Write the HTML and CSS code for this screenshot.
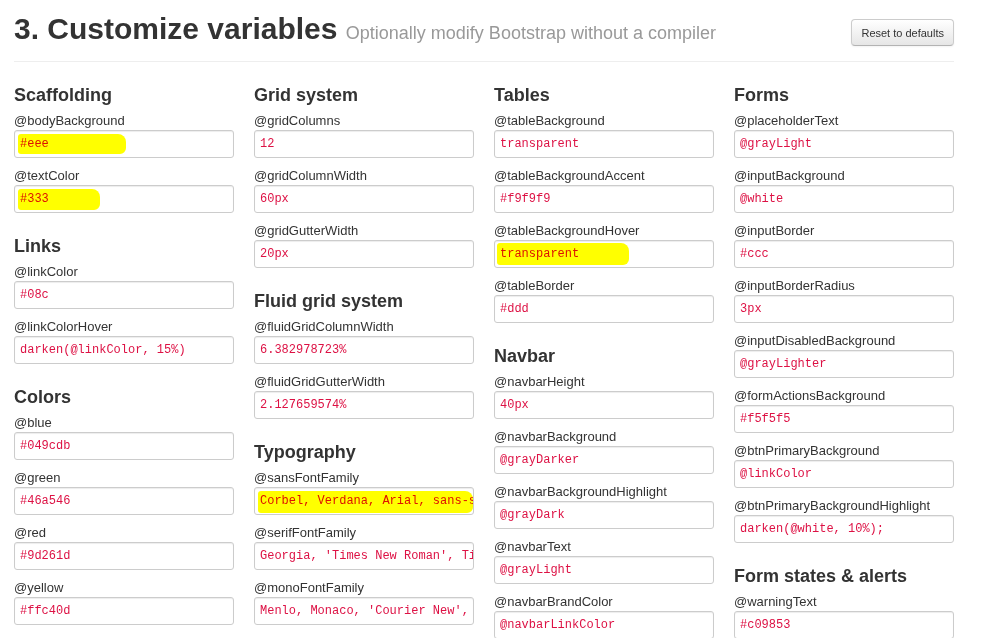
FILE: index.html
```html
<!DOCTYPE html>
<html>
<head>
<meta charset="utf-8">
<title>Customize variables</title>
<link rel="stylesheet" href="styles.css">
</head>
<body>
<div class="container">
  <div class="page-header">
    <h1>3. Customize variables <small>Optionally modify Bootstrap without a compiler</small></h1>
    <button class="btn">Reset to defaults</button>
  </div>
  <div class="row">
    <div class="col">
      <h3>Scaffolding</h3>
      <label>@bodyBackground</label>
      <div class="inp"><span class="mark mark-eee"></span><span class="val">#eee</span></div>
      <label>@textColor</label>
      <div class="inp"><span class="mark mark-333"></span><span class="val">#333</span></div>
      <h3>Links</h3>
      <label>@linkColor</label>
      <div class="inp"><span class="val">#08c</span></div>
      <label>@linkColorHover</label>
      <div class="inp"><span class="val">darken(@linkColor, 15%)</span></div>
      <h3>Colors</h3>
      <label>@blue</label>
      <div class="inp"><span class="val">#049cdb</span></div>
      <label>@green</label>
      <div class="inp"><span class="val">#46a546</span></div>
      <label>@red</label>
      <div class="inp"><span class="val">#9d261d</span></div>
      <label>@yellow</label>
      <div class="inp"><span class="val">#ffc40d</span></div>
    </div>
    <div class="col">
      <h3>Grid system</h3>
      <label>@gridColumns</label>
      <div class="inp"><span class="val">12</span></div>
      <label>@gridColumnWidth</label>
      <div class="inp"><span class="val">60px</span></div>
      <label>@gridGutterWidth</label>
      <div class="inp"><span class="val">20px</span></div>
      <h3>Fluid grid system</h3>
      <label>@fluidGridColumnWidth</label>
      <div class="inp"><span class="val">6.382978723%</span></div>
      <label>@fluidGridGutterWidth</label>
      <div class="inp"><span class="val">2.127659574%</span></div>
      <h3>Typography</h3>
      <label>@sansFontFamily</label>
      <div class="inp"><span class="mark mark-sans"></span><span class="val">Corbel, Verdana, Arial, sans-serif</span></div>
      <label>@serifFontFamily</label>
      <div class="inp"><span class="val">Georgia, 'Times New Roman', Times, serif</span></div>
      <label>@monoFontFamily</label>
      <div class="inp"><span class="val">Menlo, Monaco, 'Courier New', monospace</span></div>
    </div>
    <div class="col">
      <h3>Tables</h3>
      <label>@tableBackground</label>
      <div class="inp"><span class="val">transparent</span></div>
      <label>@tableBackgroundAccent</label>
      <div class="inp"><span class="val">#f9f9f9</span></div>
      <label>@tableBackgroundHover</label>
      <div class="inp"><span class="mark mark-trans"></span><span class="val">transparent</span></div>
      <label>@tableBorder</label>
      <div class="inp"><span class="val">#ddd</span></div>
      <h3>Navbar</h3>
      <label>@navbarHeight</label>
      <div class="inp"><span class="val">40px</span></div>
      <label>@navbarBackground</label>
      <div class="inp"><span class="val">@grayDarker</span></div>
      <label>@navbarBackgroundHighlight</label>
      <div class="inp"><span class="val">@grayDark</span></div>
      <label>@navbarText</label>
      <div class="inp"><span class="val">@grayLight</span></div>
      <label>@navbarBrandColor</label>
      <div class="inp"><span class="val">@navbarLinkColor</span></div>
    </div>
    <div class="col">
      <h3>Forms</h3>
      <label>@placeholderText</label>
      <div class="inp"><span class="val">@grayLight</span></div>
      <label>@inputBackground</label>
      <div class="inp"><span class="val">@white</span></div>
      <label>@inputBorder</label>
      <div class="inp"><span class="val">#ccc</span></div>
      <label>@inputBorderRadius</label>
      <div class="inp"><span class="val">3px</span></div>
      <label>@inputDisabledBackground</label>
      <div class="inp"><span class="val">@grayLighter</span></div>
      <label>@formActionsBackground</label>
      <div class="inp"><span class="val">#f5f5f5</span></div>
      <label>@btnPrimaryBackground</label>
      <div class="inp"><span class="val">@linkColor</span></div>
      <label>@btnPrimaryBackgroundHighlight</label>
      <div class="inp"><span class="val">darken(@white, 10%);</span></div>
      <h3>Form states &amp; alerts</h3>
      <label>@warningText</label>
      <div class="inp"><span class="val">#c09853</span></div>
    </div>
  </div>
</div>
</body>
</html>
```
FILE: styles.css
```css
html, body {
  margin: 0;
  padding: 0;
  overflow: hidden;
  background: #fff;
}
body {
  font-family: "Liberation Sans", Arial, sans-serif;
  font-size: 13px;
  color: #333;
}
.container {
  width: 940px;
  margin-left: 14px;
}
.page-header {
  display: flex;
  justify-content: space-between;
  align-items: flex-start;
  padding-top: 9px;
  padding-bottom: 12px;
  border-bottom: 1px solid #eee;
}
h1 {
  margin: 0;
  height: 40px;
  font-size: 30px;
  line-height: 40px;
  font-weight: bold;
  color: #333;
  white-space: nowrap;
}
h1 small {
  font-size: 18px;
  line-height: 1;
  font-weight: normal;
  color: #999;
}
.btn {
  margin-top: 10px;
  height: 27px;
  padding: 0 9px;
  font-family: "Liberation Sans", Arial, sans-serif;
  font-size: 11px;
  color: #333;
  background: linear-gradient(#ffffff, #e6e6e6);
  border: 1px solid #ccc;
  border-bottom-color: #b3b3b3;
  border-radius: 4px;
  box-shadow: inset 0 1px 0 rgba(255,255,255,.2), 0 1px 2px rgba(0,0,0,.05);
}
.row {
  display: grid;
  grid-template-columns: repeat(4, 220px);
  column-gap: 20px;
  padding-top: 9px;
}
.col {
  display: flex;
  flex-direction: column;
}
h3 {
  margin: 14px 0 7px;
  font-size: 18px;
  line-height: 20px;
  font-weight: bold;
  color: #333;
  white-space: nowrap;
}
label {
  display: block;
  height: 18px;
  line-height: 18px;
  white-space: nowrap;
}
.inp {
  position: relative;
  box-sizing: border-box;
  width: 220px;
  height: 28px;
  margin-bottom: 9px;
  padding: 0 4px 0 5px;
  border: 1px solid #ccc;
  border-radius: 3px;
  background: #fff;
  box-shadow: inset 0 1px 1px rgba(0,0,0,.075);
  overflow: hidden;
  white-space: nowrap;
  font-family: "Liberation Mono", "Courier New", monospace;
  font-size: 12px;
  line-height: 26px;
  color: #d14;
}
.val {
  position: relative;
  mix-blend-mode: multiply;
}
.mark {
  position: absolute;
  background: #ffff00;
  border-radius: 3px 8px 6px 3px;
}
.mark-eee { left: 3px; top: 3px; width: 108px; height: 20px; }
.mark-333 { left: 3px; top: 3px; width: 82px; height: 21px; }
.mark-trans { left: 2px; top: 2px; width: 132px; height: 22px; }
.mark-sans { left: 3px; top: 3px; width: 215px; height: 22px; }
```
